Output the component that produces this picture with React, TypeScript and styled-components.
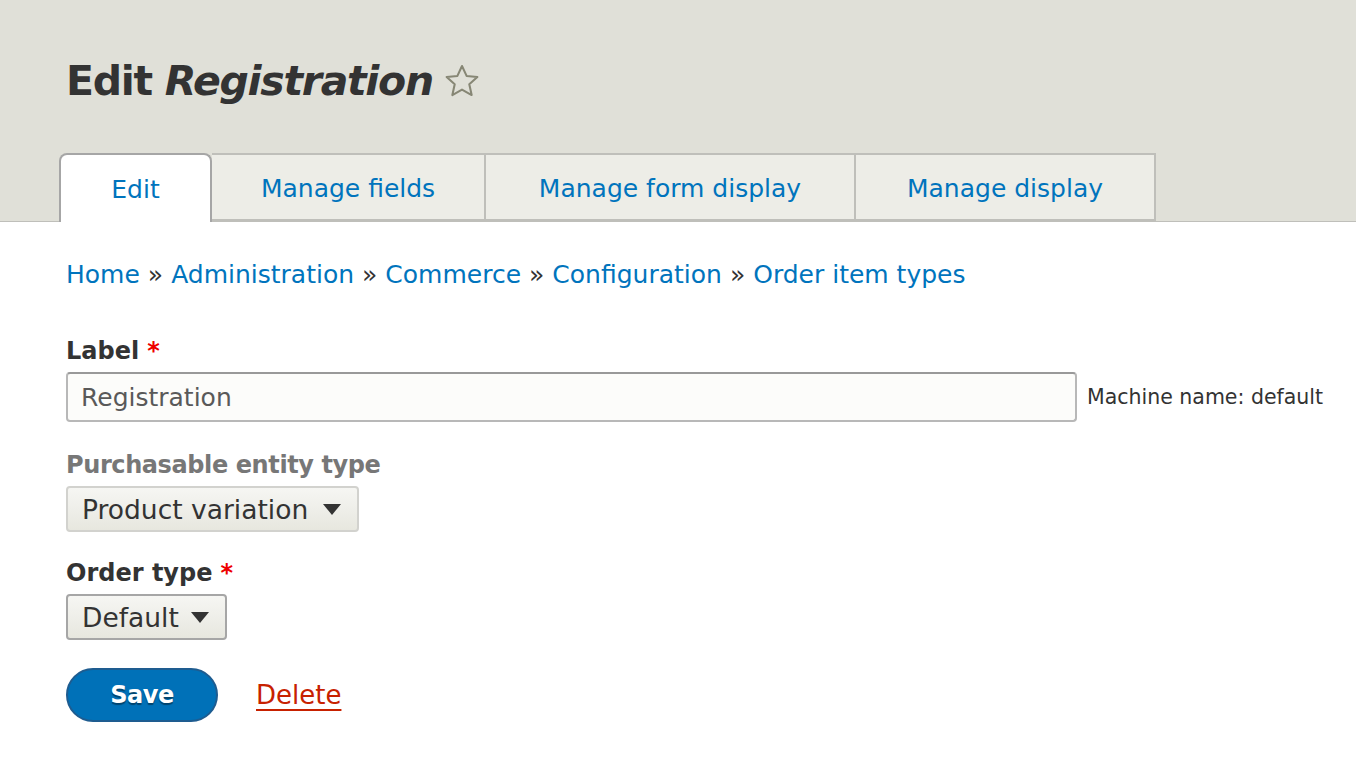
import React from 'react';
import styled, { createGlobalStyle } from 'styled-components';

const GlobalStyle = createGlobalStyle`
  html, body {
    margin: 0;
    padding: 0;
    background: #ffffff;
  }
  body {
    font-family: 'DejaVu Sans', Verdana, sans-serif;
    color: #333;
  }
`;

const Header = styled.header`
  background: #e0e0d8;
  border-bottom: 1px solid #bfbfba;
  padding: 56px 0 0 59px;
  height: 165px;
  display: flex;
  flex-direction: column;
  justify-content: space-between;
`;

const Title = styled.h1`
  margin: 0 0 0 7px;
  display: flex;
  align-items: center;
  gap: 10px;
  font-size: 41px;
  letter-spacing: -1.3px;
  font-weight: bold;
  color: #333;
  line-height: 50px;
  em {
    font-style: italic;
  }
`;

const Tabs = styled.ul`
  display: flex;
  margin: 0 0 -1px 0;
  padding: 0;
  list-style: none;
`;

const Tab = styled.li<{ $active?: boolean; $width: number }>`
  width: ${p => p.$width}px;
  box-sizing: border-box;
  height: ${p => (p.$active ? 69 : 68)}px;
  display: flex;
  align-items: center;
  justify-content: center;
  background: ${p => (p.$active ? '#ffffff' : '#ededE7')};
  border: 2px solid ${p => (p.$active ? '#a6a6a6' : '#bfbfba')};
  border-bottom: ${p => (p.$active ? 'none' : '2px solid #bfbfba')};
  border-left: ${p => (p.$active ? '2px solid #a6a6a6' : 'none')};
  border-radius: ${p => (p.$active ? '8px 8px 0 0' : '0')};
  color: #0074bd;
  font-size: 25px;
  position: relative;
  z-index: ${p => (p.$active ? 1 : 0)};
  padding-top: 2px;
`;

const Main = styled.main`
  padding: 38px 0 0 66px;
`;

const Breadcrumb = styled.nav`
  font-size: 25px;
  color: #333;
  display: flex;
  gap: 8px;
  a {
    color: #0074bd;
    text-decoration: none;
  }
`;

const Field = styled.div<{ $gap: number }>`
  margin-top: ${p => p.$gap}px;
`;

const Label = styled.label<{ $muted?: boolean }>`
  display: block;
  font-size: 24px;
  font-weight: bold;
  letter-spacing: ${p => (p.$muted ? '-0.4px' : '0')};
  color: ${p => (p.$muted ? '#777' : '#333')};
  margin-bottom: 3px;
  line-height: 36px;
`;

const Required = styled.span`
  color: #e00;
  margin-left: 8px;
`;

const InputRow = styled.div`
  display: flex;
  align-items: center;
  gap: 10px;
`;

const TextInput = styled.div`
  width: 1011px;
  height: 50px;
  box-sizing: border-box;
  border: 2px solid #b8b8b8;
  border-top-color: #999;
  border-radius: 4px;
  background: #fcfcfa;
  color: #595959;
  font-size: 25px;
  display: flex;
  align-items: center;
  padding-left: 13px;
`;

const Machine = styled.span`
  font-size: 20.5px;
  color: #333;
`;

const Select = styled.div<{ $width: number; $dark?: boolean }>`
  width: ${p => p.$width}px;
  height: 46px;
  box-sizing: border-box;
  border: 2px solid ${p => (p.$dark ? '#a6a6a6' : '#d2d2ce')};
  border-radius: 4px;
  background: linear-gradient(#f6f6f3, #e7e7df);
  display: flex;
  align-items: center;
  justify-content: space-between;
  padding: 0 16px 0 14px;
  font-size: 26.5px;
  color: #333;
`;

const Arrow = styled.span`
  width: 0;
  height: 0;
  border-left: 9px solid transparent;
  border-right: 9px solid transparent;
  border-top: 11px solid #333;
`;

const Actions = styled.div`
  margin-top: 28px;
  display: flex;
  align-items: center;
  gap: 38px;
`;

const SaveButton = styled.button`
  width: 152px;
  height: 54px;
  border-radius: 27px;
  border: 2px solid #1e5c90;
  background: #0071b8;
  color: #fff;
  font-family: 'DejaVu Sans', Verdana, sans-serif;
  font-weight: bold;
  font-size: 24px;
  letter-spacing: -0.5px;
  text-shadow: 0 2px 1px rgba(0, 0, 0, 0.4);
`;

const DeleteLink = styled.a`
  color: #c72100;
  font-size: 26px;
  text-decoration: underline;
  text-underline-offset: 5px;
`;

const Star = () => (
  <svg width="38" height="38" viewBox="0 0 24 24" fill="none" stroke="#878775" strokeWidth="1.3" strokeLinejoin="round">
    <path d="M12 2.5l2.9 6.3 6.8.7-5.1 4.6 1.5 6.8L12 17.4l-6.1 3.5 1.5-6.8-5.1-4.6 6.8-.7z" />
  </svg>
);

const App = () => {
  return (
    <>
      <GlobalStyle />
      <Header>
        <Title>
          <span>
            Edit <em>Registration</em>
          </span>
          <Star />
        </Title>
        <Tabs>
          <Tab $active $width={153}>Edit</Tab>
          <Tab $width={274}>Manage fields</Tab>
          <Tab $width={370}>Manage form display</Tab>
          <Tab $width={300}>Manage display</Tab>
        </Tabs>
      </Header>
      <Main>
        <Breadcrumb>
          <a href="#">Home</a>»<a href="#">Administration</a>»<a href="#">Commerce</a>»
          <a href="#">Configuration</a>»<a href="#">Order item types</a>
        </Breadcrumb>
        <Field $gap={44}>
          <Label>
            Label<Required>*</Required>
          </Label>
          <InputRow>
            <TextInput>Registration</TextInput>
            <Machine>Machine name: default</Machine>
          </InputRow>
        </Field>
        <Field $gap={25}>
          <Label $muted>Purchasable entity type</Label>
          <Select $width={293}>
            Product variation <Arrow />
          </Select>
        </Field>
        <Field $gap={23}>
          <Label>
            Order type<Required>*</Required>
          </Label>
          <Select $width={161} $dark>
            Default <Arrow />
          </Select>
        </Field>
        <Actions>
          <SaveButton>Save</SaveButton>
          <DeleteLink href="#">Delete</DeleteLink>
        </Actions>
      </Main>
    </>
  );
};

export default App;
